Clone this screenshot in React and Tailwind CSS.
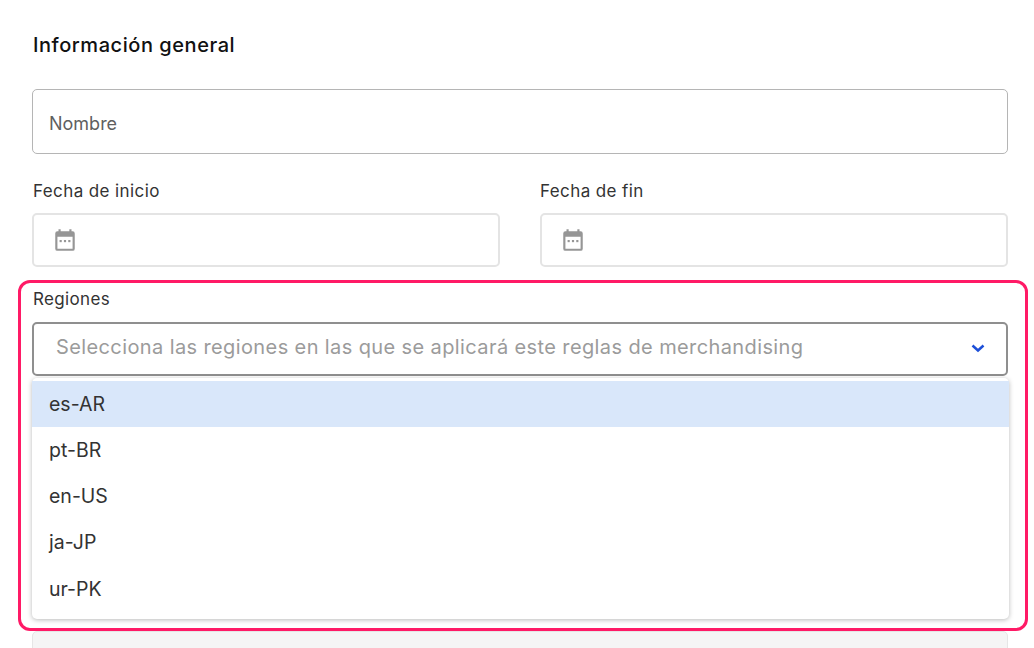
const SANS = "font-['Inter','Liberation_Sans',sans-serif]";

function Calendar() {
  return (
    <svg width="26" height="26" viewBox="0 0 24 24" className="shrink-0 text-[#969696]" fill="currentColor">
      <path d="M6 2h2v2h8V2h2v2h1a2 2 0 0 1 2 2v14a2 2 0 0 1-2 2H5a2 2 0 0 1-2-2V6a2 2 0 0 1 2-2h1V2Zm-1 7v11h14V9H5Z" />
      <rect x="7" y="12" width="2" height="2" />
      <rect x="11" y="12" width="2" height="2" />
      <rect x="15" y="12" width="2" height="2" />
    </svg>
  );
}

function DateField({ label, inset }) {
  return (
    <div className="flex-1">
      <div className={`h-[25px] pt-px text-[17px] leading-[24px] tracking-[0.4px] text-[#333] ${inset ? "pl-px" : ""}`}>{label}</div>
      <div className="mt-[10px] flex h-[54px] items-center rounded-[5px] border-2 border-[#e4e4e4] bg-white pl-[18px]">
        <Calendar />
      </div>
    </div>
  );
}

export default function App() {
  const options = ["es-AR", "pt-BR", "en-US", "ja-JP", "ur-PK"];
  return (
    <div className={`${SANS} h-[648px] w-[1034px] overflow-hidden bg-white pl-[32px] pr-[26px]`}>
      <h2 className="pt-[32px] pl-px text-[20px] leading-[26px] font-medium tracking-[0.55px] text-[#111]">Información general</h2>
      <div className="mt-[31px] flex h-[65px] items-center rounded-[5px] border border-[#b5b5b5] pt-[4px] pl-[16px] text-[18px] text-[#5f5f5f]">
        Nombre
      </div>
      <div className="mt-[24px] flex gap-[40px]">
        <DateField label="Fecha de inicio" inset />
        <DateField label="Fecha de fin" />
      </div>
      <div className="mt-[13px] mr-[-20px] ml-[-14px] h-[351px] rounded-[12px] border-[3px] border-[#ff1a66] pt-[4px] pr-[17px] pl-[11px]">
        <div className="h-[24px] pl-px text-[17px] leading-[24px] tracking-[0.35px] text-[#333]">Regiones</div>
        <div className="mt-[11px] flex h-[54px] items-center justify-between rounded-[5px] border-2 border-[#8f8f8f] bg-white pr-[20px] pb-[4px] pl-[22px]">
          <span className="text-[20px] tracking-[0.39px] text-[#9b9b9b]">
            Selecciona las regiones en las que se aplicará este reglas de merchandising
          </span>
          <svg width="16" height="16" viewBox="0 0 16 16" fill="none" stroke="#1d4fd8" strokeWidth="2.5" className="mt-[2px]">
            <path d="M2.5 5.5 8 10.5l5.5-5" />
          </svg>
        </div>
        <div className="mt-[2px] mr-[-1px] h-[241px] rounded-[5px] bg-white pt-[3px] shadow-[0_1px_5px_rgba(0,0,0,0.28)]">
          {options.map((o, i) => (
            <div
              key={o}
              className={`flex h-[46.25px] items-center pl-[17px] text-[19.5px] text-[#333] ${i === 0 ? "bg-[#d9e7fa]" : ""}`}
            >
              {o}
            </div>
          ))}
        </div>
      </div>
      <div className="h-[40px] rounded-[5px] border border-[#e6e6e6] bg-[#f5f5f5]" />
    </div>
  );
}
